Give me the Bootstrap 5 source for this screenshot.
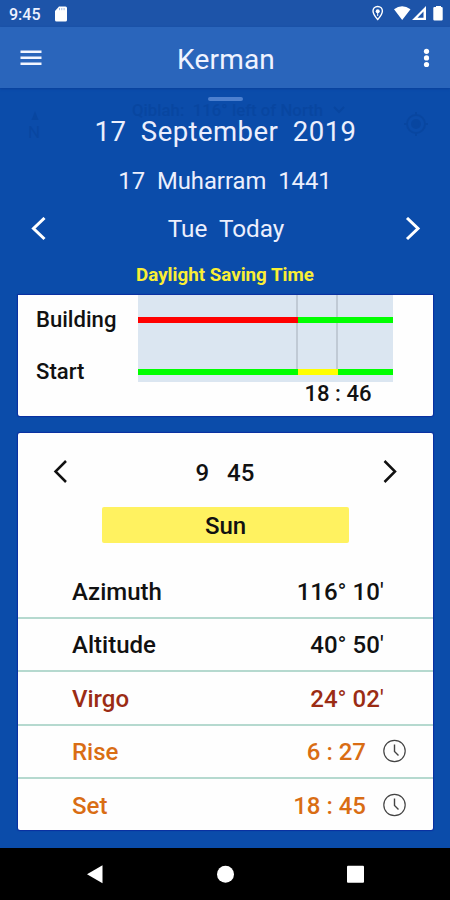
<!DOCTYPE html>
<html lang="en">
<head>
<meta charset="utf-8">
<meta name="viewport" content="width=device-width, initial-scale=1">
<title>Kerman</title>
<link href="https://cdn.jsdelivr.net/npm/bootstrap@5.3.0/dist/css/bootstrap.min.css" rel="stylesheet">
<style>
body{font-family:Roboto,sans-serif;background:#0b4caa;color:#111;line-height:1}
.screen{width:450px;height:900px;background:#0b4caa}
.txt{white-space:pre}
.statusbar{height:27px;background:#1d54a9;padding:0 7px 0 9px}
.statusbar .clock{font-size:16px;font-weight:500;color:#eef2ff;padding-top:2px;margin-right:13px}
.appbar{height:61px;background:#2a65bb;padding:0 15px 0 20px;box-shadow:0 1px 2px #0a3f9a}
.appbar .heading{font-size:28px;color:#f0f3ff;letter-spacing:.2px;padding:4px 8px 0 0}
.head-panel{height:207px;color:#eceffd}
.handle{width:35px;height:4px;margin-top:9px;background:#4d80cf;border-radius:2px}
.line-a{height:60px;font-size:27.5px;letter-spacing:.45px;padding:1px 0 0 1px}
.line-b{height:41px;font-size:23.8px;padding-top:1px}
.line-c{height:54px;font-size:24.3px;padding:0 29px 0 31px}
.line-d{height:39px;font-size:18.75px;font-weight:700;color:#f9ee35}
.ghost{color:#063f96;opacity:.45;pointer-events:none}
.ghost span,.ghost svg{position:absolute;white-space:nowrap}
.g-title{left:132px;top:102px;font-size:16.8px;line-height:16px;font-weight:500}
.g-north{left:28px;top:124px;font-size:17px}
.g-needle{left:31px;top:111px}
.g-chev{left:333px;top:106px}
.g-target{left:403px;top:111px}
.panel{width:415px;margin-left:18px;background:#fefefe;border-radius:2px;box-shadow:0 0 1px 1px #0a2fa0}
.chart-panel{height:121px;border-radius:0 0 2px 2px;font-size:22.1px;font-weight:500}
.labels{width:120px;padding-left:18px}
.labels div{height:52px;padding-bottom:4px}
.plot{width:255px;height:87px;background:#dbe6f1}
.plot .track{height:6px}
.plot .gap-a{height:22px}.plot .gap-b{height:46px}
.seg1{width:160px}.seg2{width:40px}.seg3{width:55px}
.rule{border-right:2px solid #c0cad5}
.red{background:#f00}.green{background:#0f0}.yellow{background:#ff0}
.axis-time{width:80px;margin-left:160px}
.sun-panel{height:397px;margin-top:17px;font-size:24px;font-weight:500}
.stepper{height:74px;padding:4px 36px 0 35px}
.hm{padding-top:1px}
.sunbar{width:247px;height:36px;margin-left:84px;background:#fff260;border-radius:2px;padding-top:2px}
.lead-gap{height:22px}
.datarow{height:53.5px;padding:2px 49px 0 54px;border-bottom:2px solid #b5d9cf}
.datarow.timed{padding-right:27px}
.datarow:last-child{border-bottom:0;padding-top:0}
.datarow svg{margin-top:-2px}
.virgo{color:#9b2c14}.orange{color:#d96d14}
.navkeys{height:52px;background:#000;margin-top:18px}
.deg{font-weight:400}
</style>
</head>
<body>
<div class="screen position-relative overflow-hidden d-flex flex-column">
  <div class="statusbar d-flex align-items-center justify-content-between flex-shrink-0">
    <div class="d-flex align-items-center">
      <span class="clock">9:45</span>
      <svg width="15" height="16" viewBox="-1 0 15 16"><path d="M4 .5h6.500Q12 .5 12 2v12q0 1.500-1.500 1.500h-9Q0 15.500 0 14V5z" fill="#fff"/><path d="M4.500 2v2.200M6.800 2v2.200M9.100 2v2.200" stroke="#9db9e4" stroke-width="1"/></svg>
    </div>
    <svg width="71" height="17" viewBox="0 0 71 17" fill="#fff"><path d="M5.700 1.500C2.900 1.500 1 3.500 1 6c0 3.200 4.700 8.500 4.700 8.500S10.400 9.200 10.400 6c0-2.500-1.900-4.500-4.700-4.500z" fill="none" stroke="#fff" stroke-width="1.400"/><circle cx="5.700" cy="6.200" r="2"/><path d="M5.700 6v5" stroke="#fff"/><path d="M22 4.300q8-6 16.500 0L30.200 15zM54 1v14H40z"/><path d="M51.500 6.500v6.300h-6z" fill="#1d54a9"/><path d="M62.500 2H64V1h5v1h.5q1.200 0 1.200 1v11.500q0 1-1.200 1h-7q-1.200 0-1.200-1V3q0-1 1.200-1z"/></svg>
  </div>
  <header class="appbar d-flex align-items-center justify-content-between flex-shrink-0 position-relative">
    <svg width="22" height="16" viewBox="0 0 22 16"><path d="M.5 1.700h21M.5 7.700h21M.5 13.700h21" stroke="#f3f6ff" stroke-width="2.500"/></svg>
    <span class="heading">Kerman</span>
    <svg width="17" height="20" viewBox="0 0 17 20" fill="#fff"><circle cx="8.500" cy="3.300" r="2.600"/><circle cx="8.500" cy="9.900" r="2.600"/><circle cx="8.500" cy="16.500" r="2.600"/></svg>
  </header>
  <section class="head-panel flex-shrink-0">
    <div class="handle mx-auto"></div>
    <div class="line-a txt d-flex align-items-center justify-content-center">17  September  2019</div>
    <div class="line-b txt d-flex align-items-center justify-content-center">17  Muharram  1441</div>
    <div class="line-c d-flex align-items-center justify-content-between">
      <svg width="16" height="24" viewBox="0 0 16 24"><path d="M13.500 1 2.500 11.500l11 10.500" fill="none" stroke="#fff" stroke-width="3"/></svg>
      <span class="txt">Tue  Today</span>
      <svg width="16" height="24" viewBox="0 0 16 24"><path d="M2 1 13 11.500 2 22" fill="none" stroke="#fff" stroke-width="3"/></svg>
    </div>
    <div class="line-d d-flex align-items-center justify-content-center">Daylight Saving Time</div>
  </section>
  <div class="panel chart-panel d-flex flex-shrink-0">
    <div class="labels flex-shrink-0">
      <div class="d-flex align-items-center">Building</div>
      <div class="d-flex align-items-center">Start</div>
    </div>
    <div>
      <div class="plot">
        <div class="gap-a d-flex"><div class="seg1 rule"></div><div class="seg2 rule"></div></div>
        <div class="track d-flex"><div class="seg1 red"></div><div class="seg2 green"></div><div class="seg3 green"></div></div>
        <div class="gap-b d-flex"><div class="seg1 rule"></div><div class="seg2 rule"></div></div>
        <div class="track d-flex"><div class="seg1 green"></div><div class="seg2 yellow"></div><div class="seg3 green"></div></div>
      </div>
      <div class="axis-time txt text-center">18 : 46</div>
    </div>
  </div>
  <div class="panel sun-panel flex-shrink-0">
    <div class="stepper d-flex align-items-center justify-content-between">
      <svg width="15" height="24" viewBox="0 0 15 24"><path d="M13 1 2.500 11.500 13 22" fill="none" stroke="#111" stroke-width="2.500"/></svg>
      <span class="txt hm">9   45</span>
      <svg width="15" height="24" viewBox="0 0 15 24"><path d="M2.500 1 13 11.500 2.500 22" fill="none" stroke="#111" stroke-width="2.500"/></svg>
    </div>
    <div class="sunbar d-flex align-items-center justify-content-center">Sun</div>
    <div class="lead-gap"></div>
    <div class="datarow d-flex align-items-center justify-content-between"><span>Azimuth</span><span>116<span class="deg">°</span> 10<span class="deg">'</span></span></div>
    <div class="datarow d-flex align-items-center justify-content-between"><span>Altitude</span><span>40<span class="deg">°</span> 50<span class="deg">'</span></span></div>
    <div class="datarow virgo d-flex align-items-center justify-content-between"><span>Virgo</span><span>24<span class="deg">°</span> 02<span class="deg">'</span></span></div>
    <div class="datarow timed orange d-flex align-items-center"><span class="me-auto">Rise</span><span>6 : 27</span>
      <svg class="ms-3" width="24" height="24" viewBox="0 0 24 24" fill="none" stroke="#444"><circle cx="12.500" cy="12" r="10.700" stroke-width="1.200"/><path d="M12.500 5.500v7l4 4" stroke-width="1.400"/></svg></div>
    <div class="datarow timed orange d-flex align-items-center"><span class="me-auto">Set</span><span>18 : 45</span>
      <svg class="ms-3" width="24" height="24" viewBox="0 0 24 24" fill="none" stroke="#444"><circle cx="12.500" cy="12" r="10.700" stroke-width="1.200"/><path d="M12.500 5.500v7l4 4" stroke-width="1.400"/></svg></div>
  </div>
  <nav class="navkeys d-flex align-items-center justify-content-center flex-shrink-0">
    <svg width="277" height="20" viewBox="0 0 277 20" fill="#fff"><path d="M0 10.300 15.500 1.300v18z"/><circle cx="138.500" cy="10.300" r="8.500"/><rect x="260" y="1.800" width="17" height="17" rx="1"/></svg>
  </nav>
  <div class="ghost" aria-hidden="true">
    <span class="g-title">Qiblah: &nbsp;116° left of North</span>
    <span class="g-north">N</span>
    <svg class="g-needle" width="8" height="10" viewBox="0 0 8 10"><path d="M4 0 7.500 9h-7z" fill="#063f96"/></svg>
    <svg class="g-chev" width="12" height="8" viewBox="0 0 12 8"><path d="M1 1l5 5 5-5" fill="none" stroke="#063f96" stroke-width="2"/></svg>
    <svg class="g-target" width="26" height="26" viewBox="0 0 26 26" fill="none" stroke="#063f96" stroke-width="2"><circle cx="13" cy="13" r="9"/><circle cx="13" cy="13" r="4" fill="#063f96"/><path d="M13 1v3M13 22v3M1 13h3M22 13h3"/></svg>
  </div>
</div>
<script src="https://cdn.jsdelivr.net/npm/bootstrap@5.3.0/dist/js/bootstrap.bundle.min.js"></script>
</body>
</html>
